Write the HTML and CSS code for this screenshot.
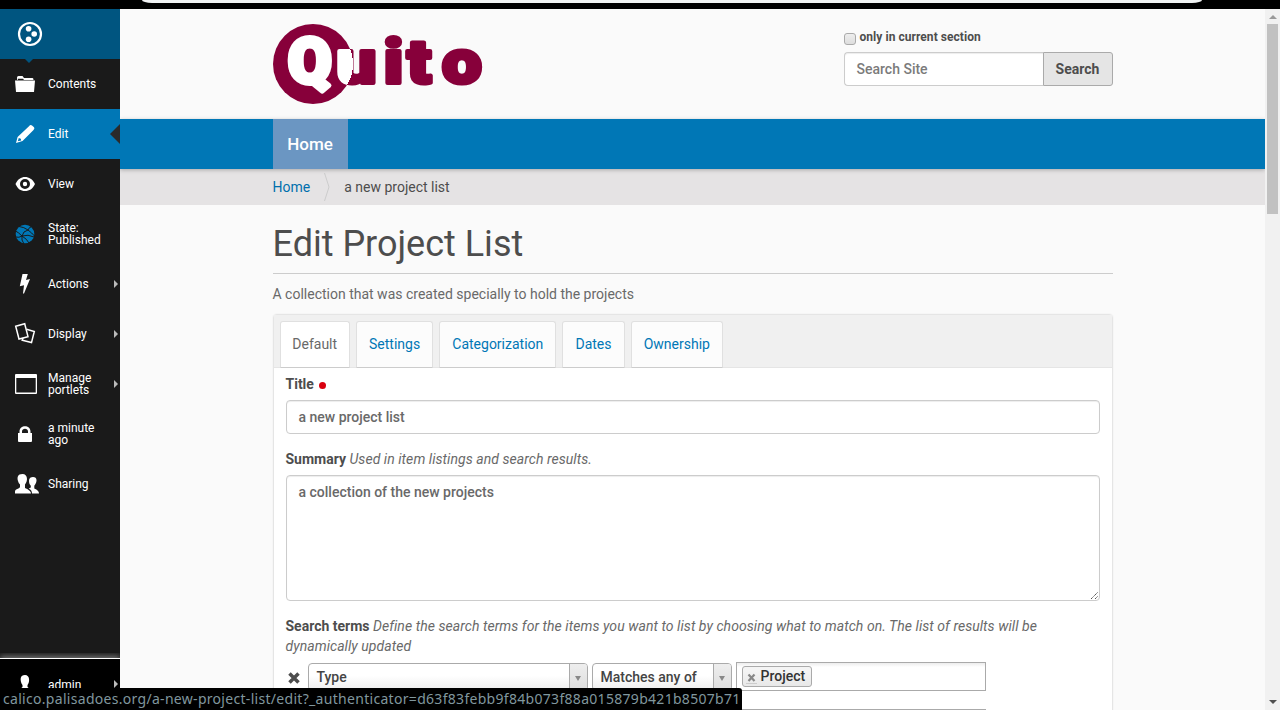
FILE: index.html
```html
<!DOCTYPE html>
<html lang="en">
<head>
<meta charset="utf-8">
<title>Edit Project List</title>
<link rel="stylesheet" href="styles.css">
</head>
<body>
<div class="browser-edge"><div class="address-bar"></div></div>
<div class="page">
  <nav class="toolbar">
    <a class="tool tool-logo">
      <svg width="30" height="30" viewBox="0 0 30 30"><circle cx="15" cy="15" r="11" fill="none" stroke="#fff" stroke-width="2.2"/><circle cx="13.6" cy="9.8" r="2.8" fill="#fff"/><circle cx="19.2" cy="15" r="2.8" fill="#fff"/><circle cx="13.6" cy="20.3" r="2.8" fill="#fff"/></svg>
    </a>
    <a class="tool"><svg class="ico" viewBox="0 0 30 30"><path fill="#fff" d="M7 11V8.500Q7 7 8.500 7H12.500L14 9H22.500Q23.500 9 23.500 11H14L13 9.800H7.800V11ZM5 11.500H25L24 23H6Z"/></svg><span>Contents</span></a>
    <a class="tool active"><svg class="ico" viewBox="0 0 30 30"><path fill="#fff" d="M19 7.300Q20.500 5 22 6.500L24 8.300Q25 9.500 23.500 11L12.500 22L6 24L7.600 18ZM8.800 19L7.800 22.300L11.200 21.400L10.800 19.800Z" fill-rule="evenodd"/></svg><span>Edit</span></a>
    <a class="tool"><svg class="ico" viewBox="0 0 30 30"><path fill="#fff" fill-rule="evenodd" d="M5.500 15C8 10 11 8 15 8S22.500 10 25 15C22.500 20 19.500 22 15 22S8 20 5.500 15ZM15 10A5 5 0 1 0 15 20A5 5 0 1 0 15 10ZM15 12.800A2.200 2.200 0 1 1 15 17.200A2.200 2.200 0 1 1 15 12.800Z"/></svg><span>View</span></a>
    <a class="tool"><svg class="ico" viewBox="0 0 30 30"><circle cx="15" cy="15" r="9.300" fill="#0077b6"/><g fill="none" stroke="#1a1a1a" stroke-width="1"><path d="M9 7.500Q14 8 18 11Q22 14 24.500 17M18 11Q19 8 22 7.500M18 11Q13 12 12 17Q11 21 14 25M5.500 12Q8 13 12 17Q18 15 24 18M12 17Q17 20 19 24M5.500 18Q9 19 12 17"/></g></svg><span>State:<br>Published</span></a>
    <a class="tool menu"><svg class="ico" viewBox="0 0 30 30"><path fill="#fff" d="M12.500 5H17.800L16 11L20 10L14 24.500H13L14 16.200L9.800 17.300Z"/></svg><span>Actions</span></a>
    <a class="tool menu"><svg class="ico" viewBox="0 0 30 30"><g fill="none" stroke="#fff" stroke-width="1.500"><path d="M5.700 7.300L14.700 4.800L18 17.600L9 20Z"/><path d="M16.500 10.200L24.300 12.500L21.500 23.600L12.200 21.200L13 19"/></g></svg><span>Display</span></a>
    <a class="tool menu"><svg class="ico" viewBox="0 0 30 30"><path fill="#fff" fill-rule="evenodd" d="M6 5H26Q27 5 27 6V24Q27 25 26 25H6Q5 25 5 24V6Q5 5 6 5ZM6.300 9V23.600H25.700V9Z"/></svg><span>Manage<br>portlets</span></a>
    <a class="tool"><svg class="ico" viewBox="0 0 30 30"><path fill="#fff" fill-rule="evenodd" d="M8 14H9.500V12.500C9.500 5.500 20.500 5.500 20.500 12.500V14H22V22Q22 23 21 23H9Q8 23 8 22ZM12 14H18V12.500C18 8.700 12 8.700 12 12.500Z"/></svg><span>a minute<br>ago</span></a>
    <a class="tool"><svg class="ico wide" viewBox="0 0 30 30"><path fill="#fff" d="M12.500 5C7.500 5 7 8.500 8 12Q8.500 14 10 15.500V18C9 20 5 20 5 22.500V24.500H21Q21 21.500 15 19V15.500C18 12 18 5 12.500 5ZM23 8C19 8 18.500 11 19.500 15L20.800 16.800V18.500L18.800 19.500Q22 21 22 24.500H29Q29 21.500 24.300 19.500V16.800C27.500 13 27.500 8 23 8Z"/></svg><span>Sharing</span></a>
    <div class="tool-spacer"></div>
    <a class="tool menu user"><svg class="ico" viewBox="0 0 30 30"><path fill="#fff" d="M15 5C10 5 10.500 9 11 12Q11.500 14 12.500 15V17L9 20V24H21V20L17.500 17V15C20 12 20 5 15 5Z"/></svg><span>admin</span></a>
  </nav>
  <div class="main">
    <header class="container header">
      <svg class="logo" width="210" height="82" viewBox="0 0 210 82">
        <defs><radialGradient id="swap" gradientUnits="userSpaceOnUse" cx="40" cy="40" r="40" gradientTransform="scale(.877 1)"><stop offset="1" stop-color="#fff"/><stop offset="1" stop-color="#87003a"/></radialGradient></defs>
        <circle cx="40" cy="40" r="40" fill="#87003a"/>
        <g class="logo-text"><text class="big" x="15" y="58.500" font-size="63" fill="#fff" stroke="#fff">Q</text><text transform="scale(1.14 1)" x="55.800 97.200 117.500 148.200" y="59.500" font-size="62" fill="url(#swap)" stroke="url(#swap)">uito</text></g>
      </svg>
      <form class="search">
        <label class="section"><span class="check"></span>only in current section</label>
        <div class="search-row"><div class="search-input">Search Site</div><div class="search-btn">Search</div></div>
      </form>
    </header>
    <div class="mainnav"><div class="container"><a class="nav-home">Home</a></div></div>
    <div class="crumbs"><div class="container crumb-row"><a>Home</a><svg width="6" height="30" viewBox="0 0 6 30"><path d="M.5 1L5 15L.5 29" fill="none" stroke="#ccc"/></svg><span>a new project list</span></div></div>
    <main class="container content">
      <h1>Edit Project List</h1>
      <p class="lead">A collection that was created specially to hold the projects</p>
      <div class="form">
        <div class="tabs"><a class="tab selected">Default</a><a class="tab">Settings</a><a class="tab">Categorization</a><a class="tab">Dates</a><a class="tab">Ownership</a></div>
        <div class="fields">
          <div class="label">Title<i class="required"></i></div>
          <div class="input">a new project list</div>
          <div class="label second">Summary <em>Used in item listings and search results.</em></div>
          <div class="input area">a collection of the new projects<svg class="grip" width="9" height="9" viewBox="0 0 9 9"><path d="M1 8L8 1M5 8L8 5" stroke="#555" stroke-dasharray="1.400 .5"/></svg></div>
          <div class="label third">Search terms <em>Define the search terms for the items you want to list by choosing what to match on. The list of results will be dynamically updated</em></div>
          <div class="query">
            <svg class="remove" width="12" height="12" viewBox="0 0 12 12"><path d="M1.500 1.500L10.500 10.500M10.500 1.500L1.500 10.500" stroke="#4d4d4d" stroke-width="3.500"/></svg>
            <div class="select type"><span>Type</span><b></b></div>
            <div class="select match"><span>Matches any of</span><b></b></div>
            <div class="values"><div class="multi"><span class="chip"><svg width="12" height="12" viewBox="0 0 12 12"><path d="M2.500 2.500L8.500 9M8.500 2.500L2.500 9" stroke="#888" stroke-width="2.200"/><path d="M0 11.500H11" stroke="#ccc"/></svg>Project</span></div><div class="dropdown"></div></div>
          </div>
        </div>
      </div>
    </main>
  </div>
  <div class="scrollbar"><i class="up"></i><div class="thumb"></div><i class="down"></i></div>
</div>
<div class="status"><span>calico.palisadoes.org/a-new-project-list/edit?_authenticator=d63f83febb9f84b073f88a015879b421b8507b71</span></div>
</body>
</html>
```
FILE: styles.css
```css
* { box-sizing: border-box; }
body { margin: 0; width: 1280px; height: 710px; overflow: hidden; position: relative; font: 400 14px/20px Roboto, "Liberation Sans", sans-serif; color: #4d4d4d; background: #fafafa; }
.browser-edge { height: 9px; background: #000; padding-left: 142px; }
.address-bar { width: 1060px; height: 3px; background: #f1f3f4; border-radius: 0 0 10px 10px / 0 0 3px 3px; }
.page { display: flex; height: 701px; }

.toolbar { width: 120px; flex: none; background: #1a1a1a; display: flex; flex-direction: column; }
.tool { height: 50px; flex: none; display: flex; align-items: center; padding-left: 10px; color: #fff; font-size: 12px; line-height: 12px; position: relative; }
.tool span { margin-left: 8px; }
.ico { width: 30px; height: 30px; flex: none; }
.tool-logo { background: #005580; padding-left: 15px; }
.tool-logo::after { content: ""; position: absolute; left: 25px; top: 50px; border: 4px solid transparent; border-top-color: #005580; border-bottom: 0; }
.active { background: #0077b6; }
.active::after { content: ""; position: absolute; right: 0; top: 15px; border: 10px solid transparent; border-right-color: #2a2a2a; border-left: 0; }
.menu::after { content: ""; position: absolute; right: 2px; top: 21px; border: 4px solid transparent; border-left-color: #bbb; border-right: 0; }
.tool-spacer { flex: 1; }
.user { height: 52px; background: #000; border-top: 1px solid #fff; box-shadow: 0 -2px 6px #777; clip-path: inset(-5px 0 0 0); }

.main { width: 1145px; flex: none; overflow: hidden; }
.container { width: 840px; margin-left: 152.5px; }
.header { height: 110px; display: flex; justify-content: space-between; padding-top: 15px; }
.logo-text { font-family: Roboto, sans-serif; font-weight: 900; stroke-width: 4px; stroke-linejoin: round; }
.big { stroke-width: 5px; }
.search { width: 269px; padding-top: 3px; }
.section { display: flex; font-size: 12px; font-weight: 700; line-height: 20px; letter-spacing: .05px; }
.check { width: 12px; height: 12px; margin: 6px 4px 0 0; border: 1px solid #aaa; border-radius: 3px; background: linear-gradient(#eee, #ddd); }
.search-row { display: flex; margin-top: 5px; height: 34px; font-weight: 500; line-height: 32px; }
.search-input { flex: 1; background: #fff; border: 1px solid #ccc; border-right: 0; border-radius: 4px 0 0 4px; padding-left: 12px; color: #7b7b7b; box-shadow: inset 0 1px 1px #00000013; }
.search-btn { width: 70px; border: 1px solid #aaa; border-radius: 0 3px 3px 0; background: #e5e5e5; text-align: center; font-weight: 700; }
.mainnav { height: 50px; background: #0077b6; box-shadow: 0 1px 4px #0004; position: relative; }
.nav-home { display: block; width: 75px; height: 50px; line-height: 51px; font-size: 17px; font-weight: 500; color: #fff; background: #6b96c2; text-align: center; }
.crumbs { height: 36px; background: #e5e3e4; }
.crumb-row { display: flex; align-items: center; height: 36px; gap: 14px; }
.crumb-row a { color: #006fad; }
h1 { font-size: 36px; line-height: 40px; font-weight: 400; margin: 0; height: 69px; padding-top: 19px; border-bottom: 1px solid #ccc; }
.lead { margin: 10px 0; color: #696969; }
.form { height: 420px; border: 1px solid #e5e5e5; border-radius: 4px 4px 0 0; background: #fff; box-shadow: 0 0 2px #0001; }
.tabs { display: flex; gap: 6px; padding: 6px 6px 0; height: 53px; background: #f0f0f0; border-bottom: 1px solid #e5e5e5; }
.tab { height: 47px; padding: 0 12.1px; border: 1px solid #e0e0e0; border-bottom-color: #ccc; border-radius: 3px 3px 0 0; background: #fcfcfc; color: #0077b6; line-height: 45px; }
.selected { background: #fff; color: #696969; padding: 0 11.8px; }
.fields { padding: 6px 12px; }
.label { font-weight: 700; }
.label em { font-weight: 400; color: #696969; letter-spacing: .055px; }
.required { display: inline-block; width: 7px; height: 7px; margin-left: 5px; border-radius: 50%; background: #d9000f; }
.input { height: 34px; margin-top: 6px; padding: 6px 12px; border: 1px solid #ccc; border-radius: 4px; font-weight: 500; color: #696969; box-shadow: inset 0 1px 1px #00000013; position: relative; }
.second, .third { margin-top: 15px; }
.area { height: 126px; }
.grip { position: absolute; right: 0; bottom: 0; }
.query { display: flex; height: 60px; margin-top: 6px; align-items: flex-start; font-weight: 500; }
.remove { margin: 10px 8px 0 2px; flex: none; }
.select { display: flex; height: 28px; margin-top: 1px; border: 1px solid #aaa; border-radius: 4px; background: linear-gradient(#fff 45%, #eee); color: #444; line-height: 27px; padding-left: 8px; justify-content: space-between; }
.select b { width: 18px; border-left: 1px solid #aaa; background: linear-gradient(#eee, #ddd); display: grid; place-items: center; border-radius: 0 3px 3px 0; }
.select b::after { content: ""; border: 3px solid transparent; border-top: 5px solid #888; border-bottom: 0; margin-top: 3px; }
.type { width: 280px; }
.match { width: 140px; margin-left: 4px; }
.values { width: 250px; margin-left: 4px; }
.multi { height: 29px; border: 1px solid #aaa; padding: 3px 5px; display: flex; background: linear-gradient(#eee 1%, #fff 15%); }
.chip { height: 21px; width: 70px; border: 1px solid #aaa; border-radius: 3px; background: linear-gradient(#f4f4f4 20%, #eee 60%, #e8e8e8); line-height: 19px; color: #333; display: flex; align-items: flex-end; gap: 3px; padding-left: 3px; }
.chip svg { margin-bottom: 2px; flex: none; }
.dropdown { margin-top: 18px; height: 20px; border: 1px solid #aaa; }

.scrollbar { width: 15px; flex: none; background: #f1f1f1; display: flex; flex-direction: column; align-items: center; height: 701px; padding: 6px 0; }
.scrollbar i { border: 4px solid transparent; }
.scrollbar .up { border-top: 0; border-bottom-color: #999; }
.scrollbar .down { border-bottom: 0; border-top-color: #505050; margin-top: auto; }
.thumb { width: 11px; height: 190px; margin-top: 5px; background: #c1c1c1; }
.status { position: absolute; left: 0; bottom: 0; width: 742px; height: 22px; background: #000; color: #80979e; border-radius: 0 3px 0 0; padding-left: 3px; font: 14px/22px "Noto Sans", "Open Sans", sans-serif; letter-spacing: .3px; white-space: nowrap; }
```
